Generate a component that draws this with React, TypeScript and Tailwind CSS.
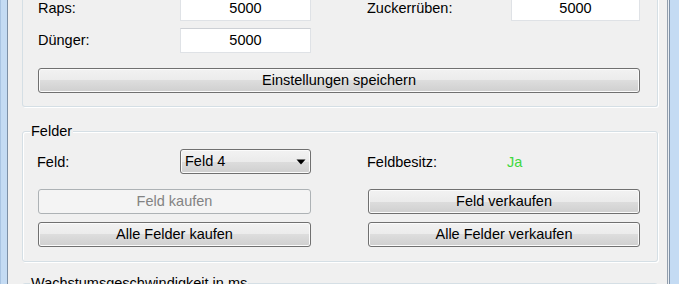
import React from "react"

// Windows 7 style push button
const btn =
  "h-[25px] rounded-[3px] border border-[#707070] bg-[linear-gradient(#f2f2f2_0%,#ebebeb_50%,#dddddd_50%,#cfcfcf_100%)] shadow-[inset_0_0_0_1px_#fbfbfb] flex items-center justify-center text-black"

const btnDisabled =
  "h-[25px] rounded-[3px] border border-[#adb2b5] bg-[#f4f4f4] flex items-center justify-center text-[#838383]"

const input =
  "h-[25px] bg-white border border-[#dfe2e6] border-t-[#cdd0d5] flex items-center justify-center pt-[1px]"

const groupBox = "relative border border-[#d5dfe5] rounded-[3px] shadow-[inset_1px_1px_0_#fff,1px_1px_0_#fff]"

function Label({ children }: { children: React.ReactNode }) {
  return <div className="h-[25px] flex items-center pt-[1px]">{children}</div>
}

function GroupTitle({ children }: { children: React.ReactNode }) {
  return (
    <span className="absolute left-[7px] top-[-9px] px-[1px] leading-[17px] bg-[#f0f0f0]">{children}</span>
  )
}

export default function App() {
  return (
    <div className="w-[679px] h-[284px] overflow-hidden flex bg-[#f0f0f0] font-['Liberation_Sans',Arial,sans-serif] text-[14.5px] text-black">
      {/* left window frame */}
      <div className="w-[8px] h-full flex shrink-0">
        <div className="w-[1px] bg-[#a9c4e2]" />
        <div className="w-[6px] bg-[#c4dbf3]" />
        <div className="w-[1px] bg-[#7d90a6]" />
      </div>

      <div className="flex-1 pl-[14px] pr-[9px]">
        {/* Einstellungen (top clipped) */}
        <div className="-mt-[4px] border-x border-b border-[#d5dfe5] rounded-b-[3px] shadow-[1px_1px_0_#fff] pl-[15px] pb-[13px]">
          <div className="grid grid-cols-[142px_131px_56px_144px_129px] gap-y-[7px]">
            <Label>Raps:</Label>
            <div className={input}>5000</div>
            <div />
            <Label>Zuckerrüben:</Label>
            <div className={input}>5000</div>

            <Label>Dünger:</Label>
            <div className={input}>5000</div>
            <div />
            <div />
            <div />

            <div className={`col-span-5 mt-[8px] ${btn}`}>Einstellungen speichern</div>
          </div>
        </div>

        {/* Felder */}
        <div className={`mt-[24px] pl-[15px] pt-[17px] pb-[14px] ${groupBox}`}>
          <GroupTitle>Felder</GroupTitle>
          <div className="grid grid-cols-[142px_131px_56px_144px_129px] gap-y-[8px]">
            <div className="-ml-[1px] h-[25px] flex items-center pt-[2px]">Feld:</div>
            <div className={`${btn} justify-between! pl-[4px] pr-[4px]`}>
              <span>Feld 4</span>
              <svg width="10" height="6" viewBox="0 0 10 6">
                <path d="M0.5 0.5 L9.5 0.5 L5 5.5 Z" fill="#000" />
              </svg>
            </div>
            <div />
            <div className="h-[25px] flex items-center pt-[2px]">Feldbesitz:</div>
            <div className="h-[25px] flex items-center pt-[2px] -ml-[4px] text-[#3fd83f]">Ja</div>

            <div className={`col-span-2 mt-[7px] ${btnDisabled}`}>Feld kaufen</div>
            <div />
            <div className={`col-span-2 mt-[7px] ml-[1px] ${btn}`}>Feld verkaufen</div>

            <div className={`col-span-2 ${btn}`}>Alle Felder kaufen</div>
            <div />
            <div className={`col-span-2 ml-[1px] ${btn}`}>Alle Felder verkaufen</div>
          </div>
        </div>

        {/* Wachstumsgeschwindigkeit (bottom clipped) */}
        <div className={`mt-[21px] h-[60px] ${groupBox}`}>
          <GroupTitle>Wachstumsgeschwindigkeit in ms</GroupTitle>
        </div>
      </div>

      {/* right window frame */}
      <div className="w-[12px] h-full flex shrink-0">
        <div className="w-[1px] bg-[#929eac]" />
        <div className="w-[1px] bg-[#e9eef4]" />
        <div className="w-[1px] bg-[#7d90a6]" />
        <div className="flex-1 bg-[#c4dbf3]" />
      </div>
    </div>
  )
}
